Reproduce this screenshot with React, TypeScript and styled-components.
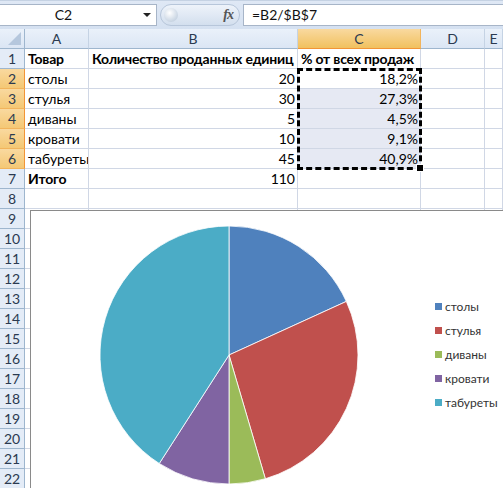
import React from "react";
import styled, { createGlobalStyle, css } from "styled-components";

const GlobalStyle = createGlobalStyle`
  html, body {
    margin: 0;
    padding: 0;
    background: #ffffff;
    overflow: hidden;
  }
  body {
    font-family: Lato, "Liberation Sans", sans-serif;
  }
`;

const Page = styled.div`
  width: 503px;
  height: 488px;
  overflow: hidden;
  position: relative;
  background: #fff;
`;

const FormulaBar = styled.div`
  display: flex;
  align-items: center;
  height: 29px;
  box-sizing: border-box;
  padding: 3px 0 4px 0;
  background: linear-gradient(#dfe8f5, #d5e1f1);
  border-top: 1px solid #c5d2e3;
`;

const NameBox = styled.div`
  position: relative;
  width: 157px;
  height: 22px;
  box-sizing: border-box;
  background: #fff;
  border: 1px solid #a7b5c8;
  border-left: none;
  display: flex;
  align-items: center;
  font-size: 14px;
  color: #111;
`;

const NameText = styled.span`
  flex: 1;
  text-align: center;
  padding-right: 16px;
`;

const DropArrow = styled.span`
  width: 0;
  height: 0;
  border-left: 4px solid transparent;
  border-right: 4px solid transparent;
  border-top: 4px solid #222;
  margin-right: 5px;
`;

const FxPill = styled.div`
  display: flex;
  align-items: center;
  justify-content: space-between;
  margin-left: 3px;
  width: 80px;
  height: 22px;
  box-sizing: border-box;
  border-radius: 11px;
  background: linear-gradient(#eef3fa, #d3dfee);
  border: 1px solid #b7c6da;
  padding: 0 6px 0 3px;
`;

const Knob = styled.span`
  width: 14px;
  height: 14px;
  border-radius: 50%;
  background: radial-gradient(circle at 40% 35%, #ffffff, #c9d5e3 70%);
`;

const Fx = styled.span`
  font-family: "Liberation Serif", serif;
  font-style: italic;
  font-weight: bold;
  font-size: 14px;
  color: #555;
  letter-spacing: -1px;
`;

const FormulaInput = styled.div`
  flex: 1;
  margin-left: 3px;
  height: 22px;
  box-sizing: border-box;
  background: #fff;
  border: 1px solid #a7b5c8;
  border-right: none;
  display: flex;
  align-items: center;
  padding-left: 8px;
  font-size: 14px;
  color: #111;
`;

const Sheet = styled.div`
  position: relative;
`;

const Grid = styled.div`
  display: grid;
  grid-template-columns: 25px 64px 209px 123px 64px 1fr;
  grid-auto-rows: 20px;
`;

const Cell = styled.div<{ $align?: "left" | "right"; $bold?: boolean; $shade?: boolean }>`
  box-sizing: border-box;
  border-right: 1px solid #d0d7e5;
  border-bottom: 1px solid #d0d7e5;
  background: ${(p) => (p.$shade ? "#e6e9f3" : "#fff")};
  font-size: 14px;
  line-height: 20px;
  color: #000;
  font-weight: ${(p) => (p.$bold ? 700 : 400)};
  letter-spacing: ${(p) => (p.$bold ? "-0.2px" : "0")};
  text-align: ${(p) => p.$align || "left"};
  padding: 0 2px 0 3px;
  white-space: nowrap;
  overflow: hidden;
`;

const headerBase = css`
  box-sizing: border-box;
  font-size: 14px;
  line-height: 20px;
  text-align: center;
  color: #2b3a50;
  border-right: 1px solid #9eb6ce;
  border-bottom: 1px solid #9eb6ce;
`;

const ColHeader = styled.div<{ $active?: boolean }>`
  ${headerBase};
  background: ${(p) =>
    p.$active
      ? "linear-gradient(#f9d99f, #f1c15f)"
      : "linear-gradient(#eaf1fa, #dbe6f4)"};
  border-bottom-color: ${(p) => (p.$active ? "#f29536" : "#9eb6ce")};
  border-right-color: ${(p) => (p.$active ? "#f2b45c" : "#c5d3e4")};
`;

const Corner = styled.div`
  ${headerBase};
  position: relative;
  background: linear-gradient(#eaf1fa, #dbe6f4);
  &::after {
    content: "";
    position: absolute;
    right: 3px;
    bottom: 3px;
    width: 0;
    height: 0;
    border-left: 13px solid transparent;
    border-bottom: 13px solid #b5c7dd;
  }
`;

const RowHeader = styled.div<{ $active?: boolean }>`
  ${headerBase};
  background: ${(p) => (p.$active ? "linear-gradient(#f9d99f, #f4c875)" : "#e4ecf7")};
  border-right-color: ${(p) => (p.$active ? "#f29536" : "#9eb6ce")};
  border-bottom-color: ${(p) => (p.$active ? "#f2b45c" : "#9eb6ce")};
`;

const Marquee = styled.div`
  position: absolute;
  left: 297px;
  top: 39px;
  width: 125px;
  height: 102px;
  box-sizing: border-box;
  border: 3px dashed #000;
  pointer-events: none;
  &::after {
    content: "";
    position: absolute;
    right: -5px;
    bottom: -5px;
    width: 6px;
    height: 6px;
    background: #000;
    border: 1px solid #fff;
  }
`;

const Chart = styled.div`
  position: absolute;
  left: 30px;
  top: 181px;
  width: 490px;
  height: 300px;
  box-sizing: border-box;
  background: #fff;
  border: 1px solid #8a8a8a;
  border-right: none;
  display: flex;
  align-items: flex-start;
`;

const PieWrap = styled.div`
  margin: 14px 0 0 68px;
  width: 260px;
  height: 260px;
`;

const Legend = styled.ul`
  list-style: none;
  margin: 87px 0 0 76px;
  padding: 0;
  display: flex;
  flex-direction: column;
  gap: 7px;
`;

const LegendItem = styled.li`
  display: flex;
  align-items: center;
  gap: 3px;
  height: 17px;
  font-size: 12px;
  color: #333;
`;

const Swatch = styled.span<{ $color: string }>`
  width: 7px;
  height: 7px;
  background: ${(p) => p.$color};
`;

const items = [
  { name: "столы", qty: 20, pct: "18,2%", color: "#4f81bd" },
  { name: "стулья", qty: 30, pct: "27,3%", color: "#c0504d" },
  { name: "диваны", qty: 5, pct: "4,5%", color: "#9bbb59" },
  { name: "кровати", qty: 10, pct: "9,1%", color: "#8064a2" },
  { name: "табуреты", qty: 45, pct: "40,9%", color: "#4bacc6" },
];

const total = items.reduce((s, i) => s + i.qty, 0);

function Pie() {
  const cx = 130;
  const cy = 130;
  const r = 129;
  let acc = 0;
  return (
    <svg width="260" height="260" viewBox="0 0 260 260">
      {items.map((it) => {
        const a0 = (acc / total) * Math.PI * 2;
        acc += it.qty;
        const a1 = (acc / total) * Math.PI * 2;
        const x0 = cx + r * Math.sin(a0);
        const y0 = cy - r * Math.cos(a0);
        const x1 = cx + r * Math.sin(a1);
        const y1 = cy - r * Math.cos(a1);
        const large = a1 - a0 > Math.PI ? 1 : 0;
        return (
          <path
            key={it.name}
            d={`M${cx},${cy} L${x0},${y0} A${r},${r} 0 ${large} 1 ${x1},${y1} Z`}
            fill={it.color}
            stroke="#fff"
            strokeWidth="0.8"
          />
        );
      })}
    </svg>
  );
}

const cols = ["A", "B", "C", "D", "E"];

export default function App() {
  const rows: React.ReactNode[] = [];
  for (let r = 1; r <= 22; r++) {
    const active = r >= 2 && r <= 6;
    let a = "";
    let b = "";
    let c = "";
    let bold = false;
    if (r === 1) {
      a = "Товар";
      b = "Количество проданных единиц";
      c = "% от всех продаж";
      bold = true;
    } else if (active) {
      const it = items[r - 2];
      a = it.name;
      b = String(it.qty);
      c = it.pct;
    } else if (r === 7) {
      a = "Итого";
      b = String(total);
    }
    rows.push(
      <React.Fragment key={r}>
        <RowHeader $active={active}>{r}</RowHeader>
        <Cell $bold={r === 1 || r === 7}>{a}</Cell>
        <Cell $bold={bold} $align={r === 1 ? "left" : "right"}>{b}</Cell>
        <Cell $bold={bold} $align={r === 1 ? "left" : "right"} $shade={r >= 3 && r <= 6}>
          {c}
        </Cell>
        <Cell />
        <Cell />
      </React.Fragment>
    );
  }

  return (
    <Page>
      <GlobalStyle />
      <FormulaBar>
        <NameBox>
          <NameText>C2</NameText>
          <DropArrow />
        </NameBox>
        <FxPill>
          <Knob />
          <Fx>fx</Fx>
        </FxPill>
        <FormulaInput>=B2/$B$7</FormulaInput>
      </FormulaBar>
      <Sheet>
        <Grid>
          <Corner />
          {cols.map((c) => (
            <ColHeader key={c} $active={c === "C"}>
              {c}
            </ColHeader>
          ))}
          {rows}
        </Grid>
        <Marquee />
        <Chart>
          <PieWrap>
            <Pie />
          </PieWrap>
          <Legend>
            {items.map((it) => (
              <LegendItem key={it.name}>
                <Swatch $color={it.color} />
                {it.name}
              </LegendItem>
            ))}
          </Legend>
        </Chart>
      </Sheet>
    </Page>
  );
}
